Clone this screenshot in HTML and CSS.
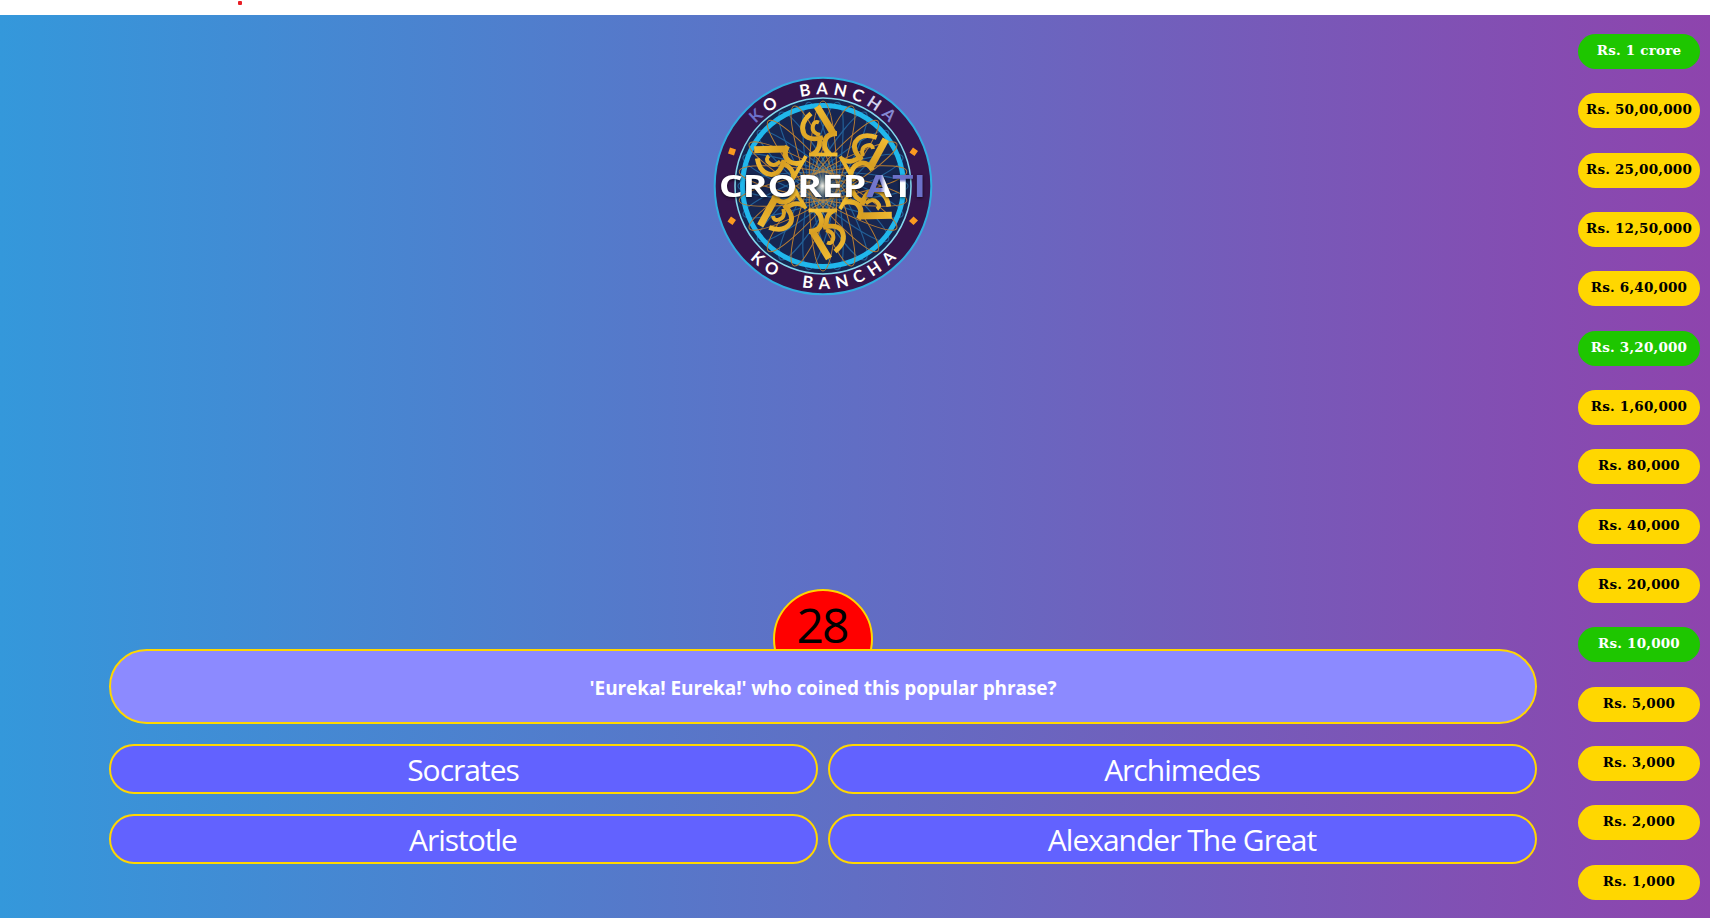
FILE: index.html
```html
<!DOCTYPE html>
<html lang="en">
<head>
<meta charset="utf-8">
<title>Ko Bancha Crorepati</title>
<link rel="stylesheet" href="styles.css">
</head>
<body>
<header class="strip"><span class="dot"></span></header>
<div class="app">
  <main class="main">
    <svg class="logo" viewBox="-110 -110 220 220" role="img">
      <defs>
        <path id="arcTop" d="M-91.500 0A91.500 91.500 0 0 1 91.500 0"/>
        <path id="arcBottom" d="M-103 0A103 103 0 0 0 103 0"/>
        <linearGradient id="goldLine" gradientUnits="userSpaceOnUse" x1="-14" y1="22" x2="14" y2="76"><stop offset="0" stop-color="#fcc936"/><stop offset=".45" stop-color="#d79e22"/><stop offset="1" stop-color="#f2bd34"/></linearGradient>
        <linearGradient id="letterFade" gradientUnits="userSpaceOnUse" x1="40" y1="0" x2="72" y2="0"><stop offset="0" stop-color="#6b70ca"/><stop offset=".55" stop-color="#7479cd"/><stop offset=".7" stop-color="#fff"/></linearGradient>
        <linearGradient id="letterTop" gradientUnits="userSpaceOnUse" x1="0" y1="-11" x2="0" y2="11"><stop offset=".2" stop-color="#6b70ca"/><stop offset=".35" stop-color="#fff"/></linearGradient>
        <radialGradient id="glow"><stop offset="0" stop-color="#fff" stop-opacity=".95"/><stop offset=".4" stop-color="#9db4bd" stop-opacity=".6"/><stop offset="1" stop-color="#1e6f9c" stop-opacity="0"/></radialGradient>
        <g id="glyph">
          <path d="M-14.500 28H14" stroke-width="3.8"/>
          <path d="M-7 28Q-1 33-1.500 40Q-3 49-14 49" stroke-width="5"/>
          <path d="M11 28Q2 32 3.500 45" stroke-width="4.6"/>
          <path d="M-11 48L6 76" stroke-width="7"/>
          <path d="M0 45Q14 41 19 48.500Q24 59 12 69" stroke-width="4.8"/>
          <path d="M3 47.500Q12 50 10 57Q8.500 62 4 60" stroke-width="4"/>
        </g>
        <g id="orbits">
          <ellipse rx="14" ry="85"/><ellipse rx="14" ry="85" transform="rotate(20)"/><ellipse rx="14" ry="85" transform="rotate(40)"/><ellipse rx="14" ry="85" transform="rotate(60)"/><ellipse rx="14" ry="85" transform="rotate(80)"/><ellipse rx="14" ry="85" transform="rotate(100)"/><ellipse rx="14" ry="85" transform="rotate(120)"/><ellipse rx="14" ry="85" transform="rotate(140)"/><ellipse rx="14" ry="85" transform="rotate(160)"/>
        </g>
      </defs>
      <circle r="108.300" fill="#36154c" stroke="#31ade0" stroke-width="2"/>
      <circle r="88" fill="#172651" stroke="#83d9ef" stroke-width="1.5"/>
      <use href="#orbits" fill="none" stroke="#235f96" stroke-width="1.200" transform="rotate(10)"/>
      <circle r="80.500" fill="none" stroke="#20b7ec" stroke-width="5"/>
      <use href="#orbits" fill="none" stroke="#b87c32" stroke-width="1"/>
      <circle r="28" fill="url(#glow)" opacity=".35"/>
      <path fill="none" stroke="#c9b055" stroke-width=".45" d="M-28 0H28M0-28V28M-24-14L24 14M-14-24L14 24M14-24L-14 24M24-14L-24 14M-27-7L27 7M27-7L-27 7M-7-27L7 27M7-27L-7 27"/>
      <g fill="none" stroke="url(#goldLine)" stroke-linejoin="round" transform="translate(0 -3.500)">
        <use href="#glyph"/><use href="#glyph" transform="rotate(60)"/><use href="#glyph" transform="rotate(120)"/><use href="#glyph" transform="rotate(180)"/><use href="#glyph" transform="rotate(240)"/><use href="#glyph" transform="rotate(300)"/>
      </g>
      <circle r="14" fill="url(#glow)"/>
      <path fill="#fb9a20" d="M-93-38.500l6 2-2 6-6-2zM90-38.500l5 3.500-3.500 5-5-3.500zM-92 30.500l5 3.500-3.500 5-5-3.500zM90.500 30.500l4.500 4-4.500 4.500-4.500-4z"/>
      <g class="ring-text">
        <text><textPath href="#arcTop" startOffset="29.700%"><tspan fill="#6b70ca">K</tspan>O</textPath></text>
        <text><textPath href="#arcTop" startOffset="59.800%">BANC<tspan fill="#d2d3f0">H</tspan><tspan fill="#8589d4">A</tspan></textPath></text>
        <text class="wide"><textPath href="#arcBottom" startOffset="30.700%">KO</textPath></text>
        <text class="wide"><textPath href="#arcBottom" startOffset="60.400%">BANCHA</textPath></text>
      </g>
      <text class="wordmark" x="-104" y="11" textLength="207" lengthAdjust="spacingAndGlyphs">CROREP<tspan fill="url(#letterFade)">A</tspan><tspan fill="url(#letterTop)">T</tspan><tspan fill="#6b70ca">I</tspan></text>
    </svg>
    <section class="quiz">
      <div class="timer">28</div>
      <div class="question">'Eureka! Eureka!' who coined this popular phrase?</div>
      <div class="options">
        <div class="option">Socrates</div>
        <div class="option">Archimedes</div>
        <div class="option">Aristotle</div>
        <div class="option">Alexander The Great</div>
      </div>
    </section>
  </main>
  <aside class="ladder">
    <div class="prize safe">Rs. 1 crore</div>
    <div class="prize">Rs. 50,00,000</div>
    <div class="prize">Rs. 25,00,000</div>
    <div class="prize">Rs. 12,50,000</div>
    <div class="prize">Rs. 6,40,000</div>
    <div class="prize safe">Rs. 3,20,000</div>
    <div class="prize">Rs. 1,60,000</div>
    <div class="prize">Rs. 80,000</div>
    <div class="prize">Rs. 40,000</div>
    <div class="prize">Rs. 20,000</div>
    <div class="prize safe">Rs. 10,000</div>
    <div class="prize">Rs. 5,000</div>
    <div class="prize">Rs. 3,000</div>
    <div class="prize">Rs. 2,000</div>
    <div class="prize">Rs. 1,000</div>
  </aside>
</div>
</body>
</html>
```
FILE: styles.css
```css
* { box-sizing: border-box; }
body {
  margin: 0;
  height: 918px;
  overflow: hidden;
  display: flex;
  flex-direction: column;
  background: #fff;
  font-family: "Open Sans", sans-serif;
}
.strip { position: relative; height: 15px; flex: none; }
.dot {
  position: absolute;
  left: 238px;
  top: 1px;
  width: 4px;
  height: 4px;
  border-radius: 1px;
  background: #e81e25;
}
.app {
  flex: 1;
  display: flex;
  justify-content: space-between;
  background: linear-gradient(to right, #3498db, #8e44ad);
}
.main {
  width: 1537px;
  padding: 61px 0 54px 109px;
  display: flex;
  flex-direction: column;
  align-items: center;
  justify-content: space-between;
}
.logo { width: 220px; height: 220px; display: block; }
.ring-text {
  font: 700 16.5px Lato, sans-serif;
  letter-spacing: 5.3px;
  fill: #fff;
  text-anchor: middle;
}
.ring-text .wide { letter-spacing: 6.7px; }
.wordmark {
  font: 700 31px "Open Sans", sans-serif;
  fill: #fff;
  filter: drop-shadow(0 1px 1.5px #000a);
}
.quiz { width: 100%; display: flex; flex-direction: column; align-items: center; }
.timer {
  width: 100px;
  height: 100px;
  margin-bottom: -40px;
  border: 2px solid gold;
  border-radius: 50%;
  background: red;
  color: #000;
  font-size: 48px;
  line-height: 67px;
  letter-spacing: -2px;
  text-indent: -2px;
  text-align: center;
}
.question {
  position: relative;
  width: 100%;
  height: 75px;
  border: 2px solid gold;
  border-radius: 38px;
  background: #8c8aff;
  color: #fff;
  font-weight: 700;
  font-size: 19px;
  line-height: 74px;
  letter-spacing: -.09px;
  text-align: center;
}
.options {
  width: 100%;
  margin-top: 20px;
  display: grid;
  grid-template-columns: 1fr 1fr;
  gap: 20px 10px;
}
.option {
  height: 50px;
  border: 2px solid gold;
  border-radius: 25px;
  background: #6262ff;
  color: #fff;
  font-size: 30px;
  line-height: 47px;
  letter-spacing: -1px;
  text-indent: -1px;
  text-align: center;
}
.ladder {
  width: 132px;
  padding: 19px 10px 18px 0;
  display: flex;
  flex-direction: column;
  justify-content: space-between;
}
.prize {
  height: 35px;
  border-radius: 18px;
  background: gold;
  color: #000;
  font: 700 13.5px/33px "DejaVu Serif", serif;
  letter-spacing: .2px;
  text-align: center;
  white-space: nowrap;
}
.safe { background: #1ec600; color: #fff; }
```
